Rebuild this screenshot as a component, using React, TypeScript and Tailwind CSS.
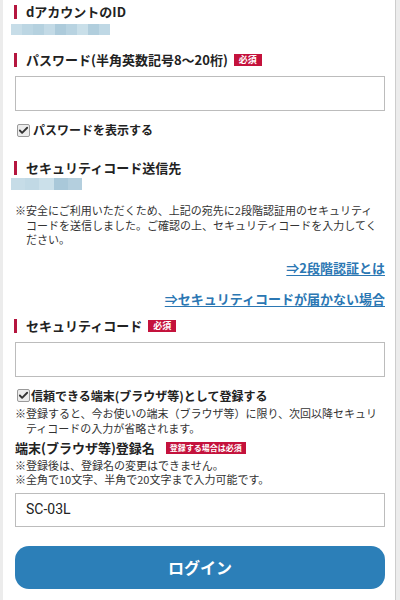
import { Check } from 'lucide-react';

const idBlocks = [
  'bg-[#c7dde8]', 'bg-[#bcd6e3]', 'bg-[#b5d1df]', 'bg-[#c3dae6]', 'bg-[#adcbdb]',
  'bg-[#b8d3e1]', 'bg-[#c9dfe9]', 'bg-[#b1cedd]', 'bg-[#bfd8e5]',
];
const sendBlocks = ['bg-[#c6dce7]', 'bg-[#c1d9e5]', 'bg-[#cbe0ea]', 'bg-[#a9c8d9]', 'bg-[#b4cfde]'];

function Heading({ children, badge }: { children: React.ReactNode; badge?: string }) {
  return (
    <div className="flex h-5 items-center">
      <span className="-ml-px h-[14px] w-[3px] bg-[#b5163f]" />
      <span className="ml-[9px] text-[13px] font-bold leading-5 text-[#222]">{children}</span>
      {badge && (
        <span className="ml-[6px] bg-[#c4123c] px-[5px] text-[9px] font-bold leading-[12px] text-white">{badge}</span>
      )}
    </div>
  );
}

function Box({ checked }: { checked?: boolean }) {
  return (
    <span className="flex h-[13px] w-[13px] items-center justify-center rounded-[2px] border border-[#9a9a9a] bg-[#ececec]">
      {checked && <Check size={13} strokeWidth={4} className="text-[#333]" />}
    </span>
  );
}

export default function App() {
  return (
    <div className="flex h-[600px] w-[400px] overflow-hidden bg-[#ececec] font-['Noto_Sans_CJK_JP',sans-serif] text-[#333]">
      <div className="ml-[3px] flex w-[393px] flex-col border-r border-[#cdcdcd] bg-white pl-3 pr-[10px] pt-[2px]">

        {/* dアカウントのID */}
        <Heading>dアカウントのID</Heading>
        <div className="-ml-1 mt-[2px] flex h-[11px] w-[99px]">
          {idBlocks.map((c, i) => <span key={i} className={`h-full flex-1 ${c}`} />)}
        </div>

        {/* パスワード */}
        <div className="mt-[15px]">
          <Heading badge="必須">パスワード(半角英数記号8〜20桁)</Heading>
        </div>
        <div className="mt-[6px] h-[35px] w-[370px] border border-[#bcbcbc] bg-white" />
        <label className="mt-[9px] flex h-5 items-center">
          <span className="ml-[2px]"><Box checked /></span>
          <span className="ml-[3px] text-[12px] font-bold leading-5 text-[#222]">パスワードを表示する</span>
        </label>

        {/* 送信先 */}
        <div className="mt-[18px]">
          <Heading>セキュリティコード送信先</Heading>
        </div>
        <div className="-ml-1 flex h-[12px] w-[71px]">
          {sendBlocks.map((c, i) => <span key={i} className={`h-full flex-1 ${c}`} />)}
        </div>
        <p className="mt-[13px] whitespace-nowrap pl-[11px] -indent-[11px] text-[11px] leading-[14.5px]">
          ※安全にご利用いただくため、上記の宛先に2段階認証用のセキュリティ<br />
          コードを送信しました。ご確認の上、セキュリティコードを入力してく<br />
          ださい。
        </p>

        {/* links */}
        <div className="mt-[11px] flex flex-col items-end text-[13px] font-bold leading-5 text-[#2b77b3]">
          <a className="underline underline-offset-2">⇒2段階認証とは</a>
          <a className="mt-[11px] underline underline-offset-2">⇒セキュリティコードが届かない場合</a>
        </div>

        {/* セキュリティコード */}
        <div className="mt-[7px]">
          <Heading badge="必須">セキュリティコード</Heading>
        </div>
        <div className="mt-[6px] h-[35px] w-[370px] border border-[#bcbcbc] bg-white" />
        <label className="mt-[9px] flex h-5 items-center">
          <span className="ml-[2px]"><Box checked /></span>
          <span className="ml-[1px] text-[12px] font-bold leading-5 text-[#222]">信頼できる端末(ブラウザ等)として登録する</span>
        </label>
        <p className="whitespace-nowrap pl-[11px] -indent-[11px] text-[11px] leading-[15px]">
          ※登録すると、今お使いの端末（ブラウザ等）に限り、次回以降セキュリ<br />
          ティコードの入力が省略されます。
        </p>

        {/* 登録名 */}
        <div className="mt-[2px] flex h-5 items-center">
          <span className="text-[13px] font-bold leading-5 text-[#222]">端末(ブラウザ等)登録名</span>
          <span className="ml-[11px] bg-[#c4123c] px-[4px] text-[8px] font-bold leading-[12px] text-white">登録する場合は必須</span>
        </div>
        <p className="text-[11px] leading-[14.5px]">
          ※登録後は、登録名の変更はできません。<br />
          ※全角で10文字、半角で20文字まで入力可能です。
        </p>
        <div className="mt-[6px] flex h-[34px] w-[370px] items-center border border-[#bcbcbc] bg-white px-[10px] font-['Roboto',sans-serif] text-[14px] text-[#222]">
          SC-03L
        </div>

        <button className="mt-[19px] h-[43px] w-[370px] rounded-[14px] bg-[#2c7fb8] text-[16px] font-bold text-white">
          ログイン
        </button>
      </div>
    </div>
  );
}
